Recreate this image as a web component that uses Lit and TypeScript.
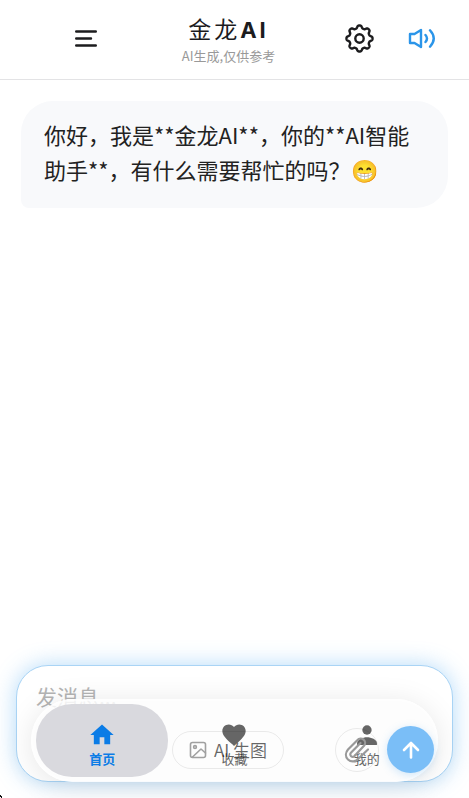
import { LitElement, html, css, svg } from "lit";
import { customElement, property } from "lit/decorators.js";

const icons = {
  home: svg`<path d="M10 20v-6h4v6h5v-8h3L12 3 2 12h3v8z"/>`,
  heart: svg`<path d="M12 21.350l-1.450-1.320C5.400 15.360 2 12.280 2 8.500 2 5.420 4.420 3 7.500 3c1.740 0 3.410.81 4.500 2.090C13.090 3.810 14.760 3 16.500 3 19.580 3 22 5.420 22 8.500c0 3.780-3.400 6.860-8.550 11.540L12 21.350z"/>`,
  person: svg`<circle cx="12" cy="7.700" r="4"/><path d="M3.500 20.500v-1.500c0-3 5-5 8.500-5s8.500 2 8.500 5v1.500z"/>`,
};

/* Outline of the eight-toothed settings wheel, centred on 0,0. */
const gearPath = (() => {
  const points: string[] = [];
  for (let i = 0; i < 240; i++) {
    const a = (i / 240) * Math.PI * 2;
    const wave = Math.cos(8 * a);
    const r = 11.7 + 1.45 * Math.tanh(1.6 * wave);
    points.push(`${(r * Math.cos(a)).toFixed(2)} ${(r * Math.sin(a)).toFixed(2)}`);
  }
  return `M${points.join("L")}Z`;
})();

@customElement("chat-header")
export class ChatHeader extends LitElement {
  static styles = css`
    :host { display: block; border-bottom: 1px solid #e3e3e5; background: #fff; }
    header {
      display: grid; grid-template-columns: 1fr auto 1fr; align-items: center;
      height: 79px; padding: 0 32px 2px 20px; box-sizing: border-box;
    }
    button { border: 0; padding: 0; background: none; color: #1c1c1e; display: flex; }
    svg { display: block; fill: none; stroke: currentColor; stroke-linecap: round; stroke-linejoin: round; }
    .menu { margin-left: 54px; }
    .title { text-align: center; padding-right: 0; }
    h1 { margin: 0; font-size: 23px; line-height: 32px; letter-spacing: 3px; font-weight: 400; color: #1c1c1e; }
    .latin { font-family: Inter, Roboto, sans-serif; font-weight: 700; font-size: 22px; }
    p { margin: 0; font-size: 13px; line-height: 20px; color: #999; }
    .actions { display: flex; justify-content: flex-end; gap: 32px; }
    .sound { color: #2b95e9; }
  `;
  render() {
    return html`<header>
      <button class="menu" aria-label="菜单">
        <svg width="24" height="24" viewBox="0 0 24 24" stroke-width="2.400"><path d="M2.200 4.500H21.800M2.200 11.500H17M2.200 18.500H21.800"/></svg>
      </button>
      <div class="title">
        <h1>金龙<span class="latin">AI</span></h1>
        <p>AI生成,仅供参考</p>
      </div>
      <div class="actions">
        <button aria-label="设置">
          <svg width="30" height="30" viewBox="-14.500 -14.500 30 30" stroke-width="2.400"><circle r="4.200"/><path d=${gearPath}/></svg>
        </button>
        <button class="sound" aria-label="声音">
          <svg width="30" height="30" viewBox="0 2.500 30 30" stroke-width="2.400"><path d="M3 12.500h4.500L14 8.500v17l-6.500-4H3zM18.500 13.500q3 3.500 0 7M23 8.800q7.500 8.200 0 16.400"/></svg>
        </button>
      </div>
    </header>`;
  }
}

@customElement("chat-composer")
export class ChatComposer extends LitElement {
  static styles = css`
    :host { display: block; margin: 0 16px 16px; }
    form {
      border: 1px solid #a9d4f5; border-radius: 32px; background: #fff; box-sizing: border-box;
      padding: 14px 18px 8px 19px; display: flex; flex-direction: column; gap: 14px;
      box-shadow: 0 0 22px rgba(70, 165, 240, 0.4);
    }
    input { border: 0; padding: 0; margin: 0; outline: 0; background: none; width: 100%; height: 32px; font: inherit; font-size: 21px; color: #222; }
    input::placeholder { color: #b4b4b4; opacity: 1; }
    .tools { display: flex; align-items: center; gap: 8px; position: relative; z-index: 3; }
    button { font: inherit; box-sizing: border-box; padding: 0; display: flex; align-items: center; justify-content: center; background: none; }
    svg { fill: none; stroke: currentColor; stroke-linecap: round; stroke-linejoin: round; }
    .image { margin: 0 auto 0 136px; height: 38px; padding: 0 16px; gap: 7px; border: 1px solid rgba(0, 0, 0, 0.08); border-radius: 19px; font-size: 17px; color: rgba(0, 0, 0, 0.6); white-space: nowrap; }
    .image svg { color: #a0a0a0; }
    .attach { width: 44px; height: 44px; border: 1px solid rgba(0, 0, 0, 0.08); border-radius: 50%; color: #999; }
    .send { width: 47px; height: 47px; border: 0; border-radius: 50%; background: #7abef7; color: #fff; box-shadow: 0 2px 8px rgba(70, 165, 240, 0.25); }
  `;
  render() {
    return html`<form @submit=${(e: Event) => e.preventDefault()}>
      <input type="text" placeholder="发消息..." aria-label="发消息" />
      <div class="tools">
        <button type="button" class="image">
          <svg width="18" height="18" viewBox="0 0 18 18" stroke-width="1.600"><rect x="1.500" y="1.500" width="15" height="15" rx="2"/><circle cx="6" cy="6" r="1.400"/><path d="M3.500 16L12 8l4.500 4"/></svg>AI 生图
        </button>
        <button type="button" class="attach" aria-label="附件">
          <svg width="28" height="28" viewBox="0 0 28 28" stroke-width="2.200"><path d="M25 13.500L15.500 22.500a7 7 0 0 1-10.500 1c-3-3-2.500-7 0-10L14.500 4a4.300 4.300 0 0 1 6.500 5.700L11.500 20a2.400 2.400 0 0 1-3.600-3.200L17.500 7"/></svg>
        </button>
        <button class="send" aria-label="发送">
          <svg width="24" height="24" viewBox="0 0 24 24" stroke-width="2.600"><path d="M12 19.500V5M5 12l7-7 7 7"/></svg>
        </button>
      </div>
    </form>`;
  }
}

@customElement("tab-bar")
export class TabBar extends LitElement {
  @property() current = "home";
  static styles = css`
    :host { position: absolute; left: 31px; right: 31px; bottom: 16px; z-index: 2; }
    nav { display: flex; padding: 5px; border-radius: 42px; background: rgba(253, 253, 253, 0.84); box-shadow: 0 4px 30px rgba(0, 0, 0, 0.1), inset 0 0 0 2px rgba(255, 255, 255, 0.6); }
    a { flex: 1; height: 73px; display: flex; flex-direction: column; align-items: center; justify-content: center; box-sizing: border-box; padding-top: 8px; border-radius: 36px; font-size: 13px; line-height: 20px; color: #666; text-decoration: none; }
    .active { background: #d9d9de; color: #0b7ce6; font-weight: 700; }
    svg { fill: currentColor; }
  `;
  render() {
    const tabs = [
      { id: "home", label: "首页", icon: icons.home },
      { id: "heart", label: "收藏", icon: icons.heart },
      { id: "person", label: "我的", icon: icons.person },
    ];
    return html`<nav>${tabs.map(
      (t) => html`<a href="#${t.id}" class=${t.id === this.current ? "active" : ""}>
        <svg width="28" height="28" viewBox="0 0 24 24">${t.icon}</svg>${t.label}
      </a>`
    )}</nav>`;
  }
}

@customElement("app-root")
export class AppRoot extends LitElement {
  static styles = css`
    :host { display: flex; flex-direction: column; min-height: 100vh; position: relative; overflow: hidden; background: #fff; font-family: "Noto Sans CJK SC", "Noto Sans", sans-serif; }
    main { flex: 1; padding: 21px; }
    .bubble { margin: 0; padding: 16px 23px 21px; border-radius: 32px 32px 32px 8px; background: #f8f9fb; color: #222; font-size: 22px; line-height: 35px; }
    .speck { position: absolute; left: 0; bottom: 0; width: 3px; height: 3px; fill: #111; }
  `;
  render() {
    return html`
      <chat-header></chat-header>
      <main><p class="bubble">你好，我是**金龙AI**，你的**AI智能助手**，有什么需要帮忙的吗？😁</p></main>
      <chat-composer></chat-composer>
      <tab-bar></tab-bar>
      <svg class="speck" viewBox="0 0 3 3" aria-hidden="true"><path d="M0 0h1v1h1v2H1V2H0z"/></svg>
    `;
  }
}
